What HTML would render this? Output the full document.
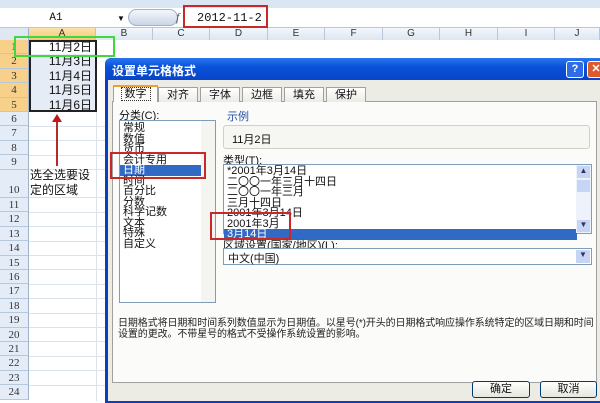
<!DOCTYPE html>
<html><head><meta charset="utf-8"><style>
*{margin:0;padding:0;box-sizing:border-box}
body{width:600px;height:401px;overflow:hidden;background:#fff;position:relative;font-family:"Liberation Sans","Noto Sans CJK SC",sans-serif;font-size:11px;color:#111}
.a{position:absolute}
.ch{position:absolute;top:28px;height:12px;border-right:1px solid #b8c8dc;background:linear-gradient(#f4f7fb,#dde6f1);font-size:10px;text-align:center;line-height:12px;color:#333}
.rh{position:absolute;left:0;width:29px;background:#e4ecf7;border-bottom:1px solid #b8c8dc;border-right:1px solid #9eb2cc;text-align:center;font-size:11px;color:#333;font-family:"Liberation Serif","Noto Serif CJK SC",serif}
.gl{position:absolute;left:29px;width:80px;border-bottom:1px solid #dde3ea}
.vl{position:absolute;top:40px;bottom:0;border-left:1px solid #dde3ea}
.cell{position:absolute;left:29px;width:67px;text-align:right;padding-right:4px;font-size:12px;background:#e6ecf5;font-family:"Liberation Sans","Noto Sans CJK SC",sans-serif}
.tab{position:absolute;top:87px;height:15px;border:1px solid #a0a0a0;border-bottom:none;background:linear-gradient(#fff,#ecebe6);font-size:11px;text-align:center;line-height:14px}
.red{position:absolute;border:2px solid #c8282a}
.li{font-size:11px;line-height:10.5px;height:10.5px;padding-left:3px;white-space:nowrap}
</style></head><body>
<div class="a" style="left:0;top:0;width:600px;height:8px;background:#dbe6f3"></div>
<div class="a" style="left:0;top:8px;width:600px;height:20px;background:#fff;border-bottom:1px solid #b8c8dc"></div>
<div class="a" style="left:0;top:8px;width:112px;height:20px;font-size:11px;line-height:20px;text-align:center;font-family:'Liberation Mono',monospace">A1</div>
<div class="a" style="left:117px;top:14px;font-size:8px">▼</div>
<div class="a" style="left:128px;top:9px;width:50px;height:17px;border-radius:9px;background:linear-gradient(#f4f7fb,#c9d6e6);border:1px solid #9fb3cc"></div>
<div class="a" style="left:176px;top:10px;font-style:italic;font-family:'Liberation Serif',serif;font-size:12px;color:#555">f</div>
<div class="a" style="left:197px;top:8px;font-size:12px;line-height:20px;font-family:'Liberation Mono',monospace">2012-11-2</div>
<div class="red" style="left:183px;top:5px;width:85px;height:23px"></div>
<div class="a" style="left:0;top:28px;width:29px;height:12px;background:#dfe7f2;border-right:1px solid #9eb2cc"></div>
<div class="ch" style="left:29px;width:67px;background:linear-gradient(#fbe3ad,#f4c675)">A</div>
<div class="ch" style="left:96px;width:57px">B</div>
<div class="ch" style="left:153px;width:57px">C</div>
<div class="ch" style="left:210px;width:58px">D</div>
<div class="ch" style="left:268px;width:57px">E</div>
<div class="ch" style="left:325px;width:58px">F</div>
<div class="ch" style="left:383px;width:57px">G</div>
<div class="ch" style="left:440px;width:58px">H</div>
<div class="ch" style="left:498px;width:57px">I</div>
<div class="ch" style="left:555px;width:45px">J</div>
<div class="vl" style="left:96px"></div>
<div class="rh" style="top:40px;height:14.4px;line-height:14px;background:#f7d08a">1</div>
<div class="rh" style="top:54.4px;height:14.4px;line-height:14px;background:#f7d08a">2</div>
<div class="rh" style="top:68.8px;height:14.4px;line-height:14px;background:#f7d08a">3</div>
<div class="rh" style="top:83.2px;height:14.4px;line-height:14px;background:#f7d08a">4</div>
<div class="rh" style="top:97.6px;height:14.4px;line-height:14px;background:#f7d08a">5</div>
<div class="rh" style="top:112px;height:14.4px;line-height:14px">6</div>
<div class="rh" style="top:126.4px;height:14.4px;line-height:14px">7</div>
<div class="rh" style="top:140.8px;height:14.4px;line-height:14px">8</div>
<div class="rh" style="top:155.2px;height:14.4px;line-height:14px">9</div>
<div class="rh" style="top:169.6px;height:28.4px;line-height:40px">10</div>
<div class="rh" style="top:198px;height:14.4px;line-height:14px">11</div>
<div class="rh" style="top:212.4px;height:14.4px;line-height:14px">12</div>
<div class="rh" style="top:226.8px;height:14.4px;line-height:14px">13</div>
<div class="rh" style="top:241.2px;height:14.4px;line-height:14px">14</div>
<div class="rh" style="top:255.6px;height:14.4px;line-height:14px">15</div>
<div class="rh" style="top:270px;height:14.4px;line-height:14px">16</div>
<div class="rh" style="top:284.4px;height:14.4px;line-height:14px">17</div>
<div class="rh" style="top:298.8px;height:14.4px;line-height:14px">18</div>
<div class="rh" style="top:313.2px;height:14.4px;line-height:14px">19</div>
<div class="rh" style="top:327.6px;height:14.4px;line-height:14px">20</div>
<div class="rh" style="top:342px;height:14.4px;line-height:14px">21</div>
<div class="rh" style="top:356.4px;height:14.4px;line-height:14px">22</div>
<div class="rh" style="top:370.8px;height:14.4px;line-height:14px">23</div>
<div class="rh" style="top:385.2px;height:14.4px;line-height:14px">24</div>
<div class="gl" style="top:126px"></div><div class="gl" style="top:140px"></div><div class="gl" style="top:155px"></div><div class="gl" style="top:169px"></div><div class="gl" style="top:197px"></div><div class="gl" style="top:212px"></div><div class="gl" style="top:226px"></div><div class="gl" style="top:241px"></div><div class="gl" style="top:255px"></div><div class="gl" style="top:269px"></div><div class="gl" style="top:284px"></div><div class="gl" style="top:298px"></div><div class="gl" style="top:313px"></div><div class="gl" style="top:327px"></div><div class="gl" style="top:341px"></div><div class="gl" style="top:356px"></div><div class="gl" style="top:370px"></div><div class="gl" style="top:385px"></div>
<div class="cell" style="top:40px;height:14.4px;line-height:15px;background:#fff">11月2日</div>
<div class="cell" style="top:54.4px;height:14.4px;line-height:15px">11月3日</div>
<div class="cell" style="top:68.8px;height:14.4px;line-height:15px">11月4日</div>
<div class="cell" style="top:83.2px;height:14.4px;line-height:15px">11月5日</div>
<div class="cell" style="top:97.6px;height:14.4px;line-height:15px">11月6日</div>
<div class="a" style="left:29px;top:40px;width:68px;height:72px;border:2px solid #222"></div>
<div class="a" style="left:14px;top:36px;width:101px;height:21px;border:2px solid #3fd83f"></div>
<div class="a" style="left:56px;top:120px;width:2px;height:46px;background:#b52a2a"></div>
<div class="a" style="left:52px;top:114px;width:0;height:0;border-left:5px solid transparent;border-right:5px solid transparent;border-bottom:8px solid #c01818"></div>
<div class="a" style="left:30px;top:168px;font-size:12px;line-height:15px;width:70px">选全选要设定的区域</div>
<div class="a" style="left:105px;top:58px;width:500px;height:345px;background:#0a3fc4;border-radius:6px 6px 0 0"></div>
<div class="a" style="left:105px;top:58px;width:500px;height:22px;background:linear-gradient(#2b75ef,#0a52d8 40%,#0745c8);border-radius:6px 6px 0 0"></div>
<div class="a" style="left:112px;top:62px;color:#fff;font-weight:bold;font-size:12px">设置单元格格式</div>
<div class="a" style="left:566px;top:61px;width:18px;height:17px;background:#2f6de6;border:1px solid #fff;border-radius:3px;color:#fff;font-weight:bold;text-align:center;line-height:15px">?</div>
<div class="a" style="left:587px;top:61px;width:18px;height:17px;background:#dd5a2c;border:1px solid #fff;border-radius:3px;color:#fff;font-weight:bold;text-align:center;line-height:15px">✕</div>
<div class="a" style="left:108px;top:80px;width:492px;height:321px;background:#ecebe4"></div>
<div class="a" style="left:112px;top:101px;width:485px;height:282px;background:#fbfbf9;border:1px solid #a0a0a0"></div>
<div class="tab" style="left:113px;top:85px;height:17px;width:45px;border-top:2px solid #f0a030;background:#fbfbf9"><span style="border:1px dotted #333;padding:0 3px">数字</span></div>
<div class="tab" style="left:158px;width:40px">对齐</div>
<div class="tab" style="left:200px;width:40px">字体</div>
<div class="tab" style="left:242px;width:40px">边框</div>
<div class="tab" style="left:284px;width:40px">填充</div>
<div class="tab" style="left:326px;width:40px">保护</div>
<div class="a" style="left:119px;top:107px;font-size:11px">分类(<u>C</u>):</div>
<div class="a" style="left:119px;top:120px;width:97px;height:183px;background:#fff;border:1px solid #7f9db9;padding-top:2px">
<div class="li">常规</div><div class="li">数值</div><div class="li">货币</div><div class="li">会计专用</div>
<div class="li" style="background:#316ac5;color:#fff;margin-right:14px">日期</div>
<div class="li">时间</div><div class="li">百分比</div><div class="li">分数</div><div class="li">科学记数</div><div class="li">文本</div><div class="li">特殊</div><div class="li">自定义</div>
<div class="a" style="right:0;top:0;width:14px;height:181px;background:#f4f4f0"></div>
</div>
<div class="red" style="left:110px;top:152px;width:96px;height:27px"></div>
<div class="a" style="left:227px;top:108px;color:#2850a8;font-size:11px">示例</div>
<div class="a" style="left:223px;top:125px;width:367px;height:24px;border:1px solid #d0d0c8;border-radius:3px;background:#f6f6f2;padding:5px 8px;font-size:11px">11月2日</div>
<div class="a" style="left:223px;top:152px;font-size:11px">类型(<u>T</u>):</div>
<div class="a" style="left:223px;top:164px;width:369px;height:70px;background:#fff;border:1px solid #7f9db9;padding-top:1px">
<div class="li">*2001年3月14日</div><div class="li">二〇〇一年三月十四日</div><div class="li">二〇〇一年三月</div><div class="li">三月十四日</div><div class="li">2001年3月14日</div><div class="li">2001年3月</div>
<div class="li" style="background:#316ac5;color:#fff;margin-right:14px">3月14日</div>
<div class="a" style="right:0;top:0;width:15px;height:68px;background:#eef2fb"></div>
<div class="a" style="right:1px;top:1px;width:13px;height:12px;background:#c6d5f5;font-size:8px;text-align:center;color:#335">▲</div>
<div class="a" style="right:1px;top:15px;width:13px;height:12px;background:#c6d5f5"></div>
<div class="a" style="right:1px;top:55px;width:13px;height:12px;background:#c6d5f5;font-size:8px;text-align:center;color:#335">▼</div>
</div>
<div class="red" style="left:210px;top:212px;width:81px;height:28px"></div>
<div class="a" style="left:223px;top:237px;font-size:11px">区域设置(国家/地区)(<u>L</u>):</div>
<div class="a" style="left:223px;top:248px;width:369px;height:17px;background:#fff;border:1px solid #7f9db9;padding:1px 4px;font-size:11px">中文(中国)<div class="a" style="right:1px;top:1px;width:14px;height:13px;background:#c6d5f5;font-size:8px;text-align:center;color:#335">▼</div></div>
<div class="a" style="left:118px;top:318px;width:480px;font-size:10px;line-height:11px;color:#222;letter-spacing:-0.1px">日期格式将日期和时间系列数值显示为日期值。以星号(*)开头的日期格式响应操作系统特定的区域日期和时间<br>设置的更改。不带星号的格式不受操作系统设置的影响。</div>
<div class="a" style="left:472px;top:381px;width:58px;height:17px;border:1px solid #003c74;border-radius:3px;background:linear-gradient(#fff,#e6e6de);text-align:center;line-height:15px;font-size:11px">确定</div>
<div class="a" style="left:540px;top:381px;width:57px;height:17px;border:1px solid #003c74;border-radius:3px;background:linear-gradient(#fff,#e6e6de);text-align:center;line-height:15px;font-size:11px">取消</div>
</body></html>
